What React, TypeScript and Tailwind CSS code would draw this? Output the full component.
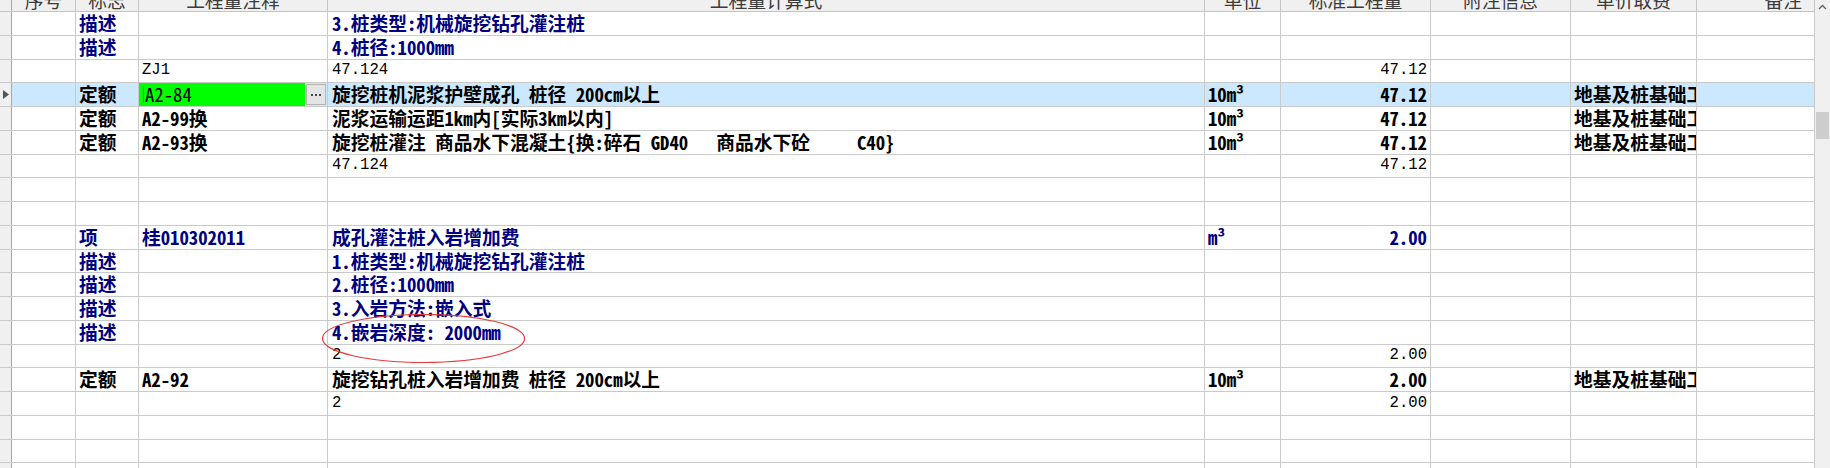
import React from 'react';

type Kind = 'desc' | 'item' | 'quota' | 'calc' | 'empty';

interface Row {
  kind: Kind;
  flag?: string;
  code?: string;
  expr?: string;
  unit?: string;
  qty?: string;
  fee?: string;
  selected?: boolean;
}

const FEE = '地基及桩基础工程';

const rows: Row[] = [
  { kind: 'desc', flag: '描述', expr: '3.桩类型:机械旋挖钻孔灌注桩' },
  { kind: 'desc', flag: '描述', expr: '4.桩径:1000mm' },
  { kind: 'calc', code: 'ZJ1', expr: '47.124', qty: '47.12' },
  { kind: 'quota', flag: '定额', code: 'A2-84', expr: '旋挖桩机泥浆护壁成孔 桩径 200cm以上', unit: '10m³', qty: '47.12', fee: FEE, selected: true },
  { kind: 'quota', flag: '定额', code: 'A2-99换', expr: '泥浆运输运距1km内[实际3km以内]', unit: '10m³', qty: '47.12', fee: FEE },
  { kind: 'quota', flag: '定额', code: 'A2-93换', expr: '旋挖桩灌注 商品水下混凝土{换:碎石 GD40   商品水下砼     C40}', unit: '10m³', qty: '47.12', fee: FEE },
  { kind: 'calc', expr: '47.124', qty: '47.12' },
  { kind: 'empty' },
  { kind: 'empty' },
  { kind: 'item', flag: '项', code: '桂010302011', expr: '成孔灌注桩入岩增加费', unit: 'm³', qty: '2.00' },
  { kind: 'desc', flag: '描述', expr: '1.桩类型:机械旋挖钻孔灌注桩' },
  { kind: 'desc', flag: '描述', expr: '2.桩径:1000mm' },
  { kind: 'desc', flag: '描述', expr: '3.入岩方法:嵌入式' },
  { kind: 'desc', flag: '描述', expr: '4.嵌岩深度: 2000mm' },
  { kind: 'calc', expr: '2', qty: '2.00' },
  { kind: 'quota', flag: '定额', code: 'A2-92', expr: '旋挖钻孔桩入岩增加费 桩径 200cm以上', unit: '10m³', qty: '2.00', fee: FEE },
  { kind: 'calc', expr: '2', qty: '2.00' },
  { kind: 'empty' },
  { kind: 'empty' },
  { kind: 'empty' },
];

const headers: { label: string; w: string; cls?: string }[] = [
  { label: '序号', w: 'w-[64px]' },
  { label: '标志', w: 'w-[63px]' },
  { label: '工程量注释', w: 'w-[189px]' },
  { label: '工程量计算式', w: 'w-[877px]' },
  { label: '单位', w: 'w-[76px]' },
  { label: '标准工程量', w: 'w-[150px]' },
  { label: '附注信息', w: 'w-[140px]' },
  { label: '单价取费', w: 'w-[126px]' },
  { label: '备注', w: 'w-[118px]', cls: 'text-right pr-[12px]' },
];

const cellBase = 'shrink-0 h-full border-r border-[#cacaca] overflow-hidden whitespace-pre flex items-center leading-none';

const Cell: React.FC<{ w: string; right?: boolean; className?: string; children?: React.ReactNode }> = ({ w, right, className = '', children }) => (
  <div className={`${cellBase} ${w} ${right ? 'justify-end pr-[3px]' : 'pl-[3px]'} ${className}`}>{children}</div>
);

const DataRow: React.FC<{ row: Row }> = ({ row }) => {
  const bold = row.kind !== 'calc';
  const color = row.kind === 'desc' || row.kind === 'item' ? 'text-[#000080]' : 'text-black';
  const weight = bold ? 'font-bold' : 'font-normal';
  const bg = row.selected ? 'bg-[#cce8ff]' : 'bg-white';
  const calcFont = row.kind === 'calc' ? "font-['Liberation_Mono',monospace] text-[15.6px]" : '';

  return (
    <div className={`flex shrink-0 h-[23.75px] border-b border-[#cacaca] ${color} ${weight}`}>
      <div className="shrink-0 w-[12px] h-full bg-[#f0f0f0] border-r border-[#a8a8a8] flex items-center justify-center">
        {row.selected && (
          <svg width="6" height="9" viewBox="0 0 6 9">
            <path d="M0 0 L6 4.5 L0 9 Z" fill="#555" />
          </svg>
        )}
      </div>
      <div className={`flex h-full ${bg}`}>
        <Cell w="w-[64px]" />
        <Cell w="w-[63px]">{row.flag}</Cell>
        {row.selected ? (
          <div className={`${cellBase} w-[189px] items-stretch`}>
            <div className="flex-1 bg-[#00ff00] flex items-center pl-[4px] font-normal">
              <div className="w-[1px] h-[17px] bg-[#ff00ff] mr-[1px]" />
              {row.code}
            </div>
            <div className="w-[20px] ml-[1px] mr-[1px] my-[1px] bg-[#e4e4e4] border border-[#b4b4b4] flex items-center justify-center gap-[2px]">
              <span className="w-[2px] h-[2px] bg-[#444]" />
              <span className="w-[2px] h-[2px] bg-[#444]" />
              <span className="w-[2px] h-[2px] bg-[#444]" />
            </div>
          </div>
        ) : (
          <Cell w="w-[189px]" className={calcFont}>{row.code}</Cell>
        )}
        <Cell w="w-[877px]" className={`pl-[4px] ${calcFont}`}>{row.expr}</Cell>
        <Cell w="w-[76px]">{row.unit}</Cell>
        <Cell w="w-[150px]" right className={calcFont}>{row.qty}</Cell>
        <Cell w="w-[140px]" />
        <Cell w="w-[126px]">{row.fee}</Cell>
        <Cell w="w-[118px]" />
      </div>
    </div>
  );
};

export default function App() {
  return (
    <div className="relative w-[1830px] h-[468px] overflow-hidden bg-white flex text-[18.75px] font-['Noto_Sans_Mono_CJK_SC','Noto_Sans_CJK_SC',sans-serif]">
      <div className="w-[1815px] shrink-0 flex flex-col">
        <div className="flex h-[12px] shrink-0 bg-[#f0f0f0] border-b border-[#c4c4c4] text-[#3c3c3c] font-normal">
          <div className="shrink-0 w-[12px] h-full border-r border-[#a8a8a8]" />
          {headers.map((h) => (
            <div key={h.label} className={`shrink-0 h-full overflow-hidden border-r border-[#c4c4c4] ${h.w}`}>
              <div className={`-mt-[12px] h-[24px] leading-[24px] whitespace-nowrap ${h.cls ?? 'text-center'}`}>{h.label}</div>
            </div>
          ))}
        </div>
        {rows.map((r, i) => (
          <DataRow key={i} row={r} />
        ))}
      </div>

      <div className="w-[15px] shrink-0 h-full bg-[#f0f0f0] flex flex-col items-center">
        <div className="h-[14px] w-full flex items-center justify-center">
          <svg width="9" height="6" viewBox="0 0 9 6">
            <path d="M1 5 L4.5 1.5 L8 5" stroke="#606060" strokeWidth="1.3" fill="none" />
          </svg>
        </div>
        <div className="h-[98px]" />
        <div className="w-[13px] h-[27px] bg-[#cdcdcd]" />
      </div>

      <svg className="absolute left-[322px] top-[314px] pointer-events-none" width="204" height="50" viewBox="0 0 204 50">
        <ellipse cx="101.5" cy="24.5" rx="101" ry="24" fill="none" stroke="#e23c3c" strokeWidth="1.2" />
      </svg>
    </div>
  );
}
